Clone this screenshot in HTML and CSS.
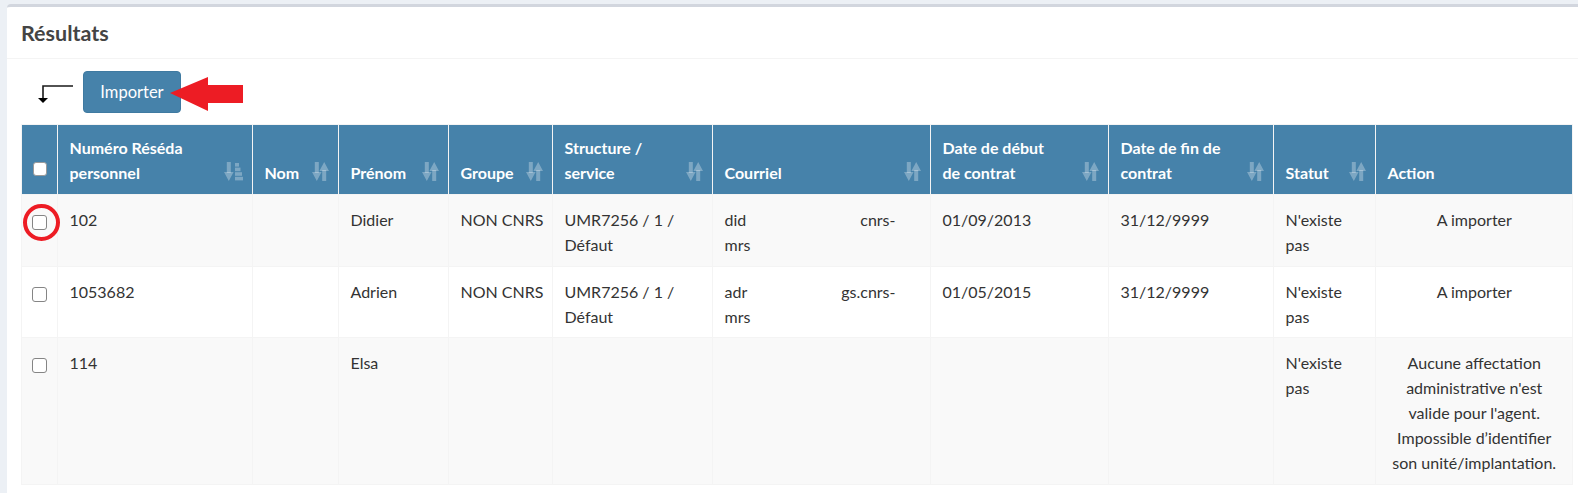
FILE: index.html
```html
<!DOCTYPE html>
<html lang="fr">
<head>
<meta charset="utf-8">
<title>Résultats</title>
<link rel="stylesheet" href="styles.css">
</head>
<body>
<svg class="defs" width="0" height="0" aria-hidden="true">
  <symbol id="i-sort" viewBox="0 0 17 19">
    <rect x="2.8" y="0" width="4" height="11"/>
    <polygon points="0,10 9.6,10 4.8,19"/>
    <polygon points="7.4,9 17,9 12.2,0"/>
    <rect x="10.2" y="8" width="4" height="11"/>
  </symbol>
  <symbol id="i-sort-attr" viewBox="0 0 19 19">
    <rect x="2.8" y="0" width="4" height="11"/>
    <polygon points="0,10 9.6,10 4.8,19"/>
    <rect x="11" y="1" width="4" height="3.6"/>
    <rect x="11" y="5.6" width="5.5" height="3.6"/>
    <rect x="11" y="10.2" width="7" height="3.6"/>
    <rect x="11" y="14.8" width="8" height="3.6"/>
  </symbol>
</svg>

<div class="card">
  <div class="card-header">
    <h3 class="card-title">Résultats</h3>
  </div>
  <div class="card-body">
    <div class="toolbar">
      <svg class="arrow-ltr" width="37" height="20" viewBox="0 0 37 20">
        <path d="M36 2H6V14" fill="none" stroke="#1a1a1a" stroke-width="1.6"/>
        <polygon points="1,14 11,14 6,19" fill="#000"/>
      </svg>
      <button class="btn" type="button">Importer</button>
      <svg class="red-arrow" width="74" height="36" viewBox="0 0 74 36">
        <polygon points="0,16 38,0 38,8 73,8 73,26 38,26 38,34" fill="#ed1c24"/>
      </svg>
    </div>

    <table class="results">
      <colgroup>
        <col style="width:36px"><col style="width:195px"><col style="width:86px"><col style="width:110px"><col style="width:104px"><col style="width:160px"><col style="width:218px"><col style="width:178px"><col style="width:165px"><col style="width:102px"><col style="width:197px">
      </colgroup>
      <thead>
        <tr>
          <th class="chk"><input type="checkbox" class="cb cb-head"></th>
          <th class="sortable">Numéro Réséda<br>personnel<svg class="sort sort-attr"><use href="#i-sort-attr"/></svg></th>
          <th class="sortable">Nom<svg class="sort"><use href="#i-sort"/></svg></th>
          <th class="sortable">Prénom<svg class="sort"><use href="#i-sort"/></svg></th>
          <th class="sortable">Groupe<svg class="sort"><use href="#i-sort"/></svg></th>
          <th class="sortable">Structure /<br>service<svg class="sort"><use href="#i-sort"/></svg></th>
          <th class="sortable">Courriel<svg class="sort"><use href="#i-sort"/></svg></th>
          <th class="sortable">Date de début<br>de contrat<svg class="sort"><use href="#i-sort"/></svg></th>
          <th class="sortable">Date de fin de<br>contrat<svg class="sort"><use href="#i-sort"/></svg></th>
          <th class="sortable">Statut<svg class="sort"><use href="#i-sort"/></svg></th>
          <th>Action</th>
        </tr>
      </thead>
      <tbody>
        <tr class="odd">
          <td class="chk"><span class="marked"><input type="checkbox" class="cb"></span></td>
          <td>102</td>
          <td></td>
          <td>Didier</td>
          <td class="nowrap">NON CNRS</td>
          <td>UMR7256 / 1 /<br>Défaut</td>
          <td class="mail"><div class="mail-line"><span>did</span><span>cnrs-</span></div><div>mrs</div></td>
          <td>01/09/2013</td>
          <td>31/12/9999</td>
          <td>N'existe<br>pas</td>
          <td class="action">A importer</td>
        </tr>
        <tr>
          <td class="chk"><input type="checkbox" class="cb"></td>
          <td>1053682</td>
          <td></td>
          <td>Adrien</td>
          <td class="nowrap">NON CNRS</td>
          <td>UMR7256 / 1 /<br>Défaut</td>
          <td class="mail"><div class="mail-line"><span>adr</span><span>gs.cnrs-</span></div><div>mrs</div></td>
          <td>01/05/2015</td>
          <td>31/12/9999</td>
          <td>N'existe<br>pas</td>
          <td class="action">A importer</td>
        </tr>
        <tr class="odd">
          <td class="chk"><input type="checkbox" class="cb"></td>
          <td>114</td>
          <td></td>
          <td>Elsa</td>
          <td></td>
          <td></td>
          <td></td>
          <td></td>
          <td></td>
          <td>N'existe<br>pas</td>
          <td class="action">Aucune affectation<br>administrative n'est<br>valide pour l'agent.<br>Impossible d’identifier<br>son unité/implantation.</td>
        </tr>
      </tbody>
    </table>
  </div>
</div>
</body>
</html>
```

FILE: styles.css
```css
html, body {
  overflow: hidden;
}
body {
  margin: 0;
  padding: 4px 0 0 7px;
  background: #ecf0f5;
  font-family: Lato, "Liberation Sans", sans-serif;
  font-size: 16px;
  line-height: 25px;
  color: #333;
}
.defs {
  position: absolute;
  width: 0;
  height: 0;
}
.card {
  width: 1590px;
  background: #fff;
  border-top: 3px solid #d2d6de;
  border-radius: 4px 0 0 0;
  min-height: 486px;
}
.card-header {
  padding: 13px 14px 12px;
  border-bottom: 1px solid #f4f4f4;
}
.card-title {
  margin: 0;
  font-size: 21.5px;
  line-height: 26px;
  font-weight: 700;
  color: #444;
}
.card-body {
  padding: 12px 14px 0;
}
.toolbar {
  position: relative;
  display: flex;
  align-items: center;
  height: 42px;
}
.arrow-ltr {
  margin-left: 16px;
  margin-top: 3px;
}
.btn {
  margin-left: 9px;
  height: 42px;
  width: 98px;
  padding: 0;
  border: 1px solid #3f7aa1;
  border-radius: 4px;
  background: #4682aa;
  color: #fff;
  font-family: Lato, "Liberation Sans", sans-serif;
  font-size: 16.5px;
}
.red-arrow {
  position: absolute;
  left: 149px;
  top: 6px;
}
.results {
  margin-top: 11px;
  width: 1551px;
  table-layout: fixed;
  border-collapse: collapse;
}
.results th,
.results td {
  border: 1px solid #f4f4f4;
  text-align: left;
}
.results th {
  position: relative;
  background: #4682aa;
  color: #fff;
  font-weight: 700;
  vertical-align: bottom;
  padding: 10px 11px 9px 11.5px;
}
.results td {
  vertical-align: top;
  padding: 12px 11px 8.5px 11.5px;
}
.results tr.odd td {
  background: #f9f9f9;
}
.results th.chk,
.results td.chk {
  padding-left: 10px;
  padding-right: 0;
}
.results td.nowrap {
  white-space: nowrap;
}
.sort {
  position: absolute;
  right: 9px;
  bottom: 13px;
  width: 17px;
  height: 19px;
  fill: rgba(255, 255, 255, 0.3);
}
.sort-attr {
  width: 19px;
}
.cb {
  -webkit-appearance: none;
  appearance: none;
  display: block;
  width: 15px;
  height: 15px;
  margin: 8px 0 0 0;
  border: 1px solid #858585;
  border-radius: 3px;
  background: #fff;
}
.cb-head {
  width: 14px;
  height: 14px;
  margin: 0 0 9px 1px;
  border-color: #9a9a9a;
}
.marked {
  position: relative;
  display: block;
  padding-top: 8px;
}
.marked .cb {
  margin-top: 0;
}
.marked::after {
  content: "";
  position: absolute;
  left: -9px;
  top: -3px;
  width: 29px;
  height: 29px;
  border: 4px solid #ed1c24;
  border-radius: 50%;
}
.mail-line {
  display: flex;
  justify-content: space-between;
  width: 171px;
}
.results td.action {
  text-align: center;
  white-space: nowrap;
}
```
